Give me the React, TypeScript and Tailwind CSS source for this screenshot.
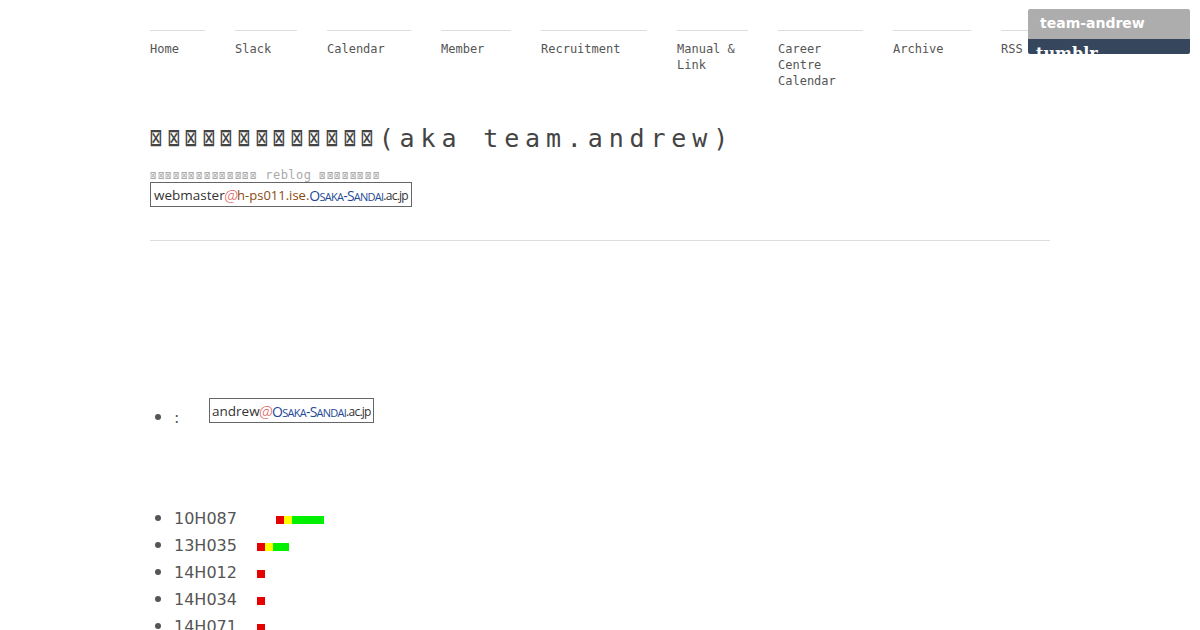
const nav: [string, string][] = [
  ["Home", "w-[55px]"],
  ["Slack", "w-[62px]"],
  ["Calendar", "w-[84px]"],
  ["Member", "w-[70px]"],
  ["Recruitment", "w-[106px]"],
  ["Manual & Link", "w-[71px]"],
  ["Career Centre Calendar", "w-[85px]"],
  ["Archive", "w-[78px]"],
  ["RSS", "w-[49px]"],
];

function Osaka() {
  return (
    <span className="text-[#1f4a96] tracking-[-0.75px] text-[14px]">
      O<span className="text-[11px]">SAKA</span>-S<span className="text-[11px]">ANDAI</span>
    </span>
  );
}

function At() {
  return <span className="text-[#d9534f] italic font-light text-[16px] leading-none mx-[-0.5px]">@</span>;
}

function Bar({ red = 8, yellow = 0, green = 0 }: { red?: number; yellow?: number; green?: number }) {
  return (
    <span className="flex h-2 mt-[3px]">
      <span className="bg-[#e60000]" style={{ width: red }} />
      <span className="bg-[#ffff00]" style={{ width: yellow }} />
      <span className="bg-[#00f000]" style={{ width: green }} />
    </span>
  );
}

function BigTofu({ n }: { n: number }) {
  return (
    <>
      {Array.from({ length: n }, (_, i) => (
        <span key={i} className="inline-block w-[17.6px] origin-[0_60%] scale-x-[0.8] scale-y-[1.25] tracking-normal">{"\u22A0"}</span>
      ))}
    </>
  );
}

function SmallTofu({ n }: { n: number }) {
  return (
    <>
      {Array.from({ length: n }, (_, i) => (
        <span key={i} className="inline-block w-[7.7px] origin-[0_60%] scale-x-[0.85] scale-y-[1.2] tracking-normal">{"\u22A0"}</span>
      ))}
    </>
  );
}

const rows = [
  { id: "10H087", w: "w-[102px]", y: 8, g: 32 },
  { id: "13H035", w: "w-[83px]", y: 8, g: 16 },
  { id: "14H012", w: "w-[83px]", y: 0, g: 0 },
  { id: "14H034", w: "w-[83px]", y: 0, g: 0 },
  { id: "14H071", w: "w-[83px]", y: 0, g: 0 },
];

export default function App() {
  return (
    <div className="relative h-[630px] w-[1200px] overflow-hidden bg-white font-['DejaVu_Sans',sans-serif] text-[#555]">
      <div className="absolute left-[1028px] top-[9px] h-[45px] w-[162px] overflow-hidden rounded-[2px]">
        <div className="h-[30px] bg-[#adadad] pl-3 text-[14px] font-bold leading-[29px] text-white">team-andrew</div>
        <div className="h-[30px] bg-[#36465d] pl-[8px] font-['DejaVu_Serif',serif] text-[16px] font-bold leading-[30px] text-white">tumblr</div>
      </div>

      <div className="mx-auto w-[900px]">
        <nav className="flex gap-[30px] pt-[30px] font-['DejaVu_Sans_Mono',monospace] text-[12px] leading-4 text-[#555]">
          {nav.map(([label, w]) => (
            <div key={label} className={`${w} border-t border-[#ddd] pt-[10px] h-[59px]`}>{label}</div>
          ))}
        </nav>

        <h1 className="mt-[33px] whitespace-nowrap font-['DejaVu_Sans_Mono',monospace] text-[25px] leading-[33px] tracking-[5.85px] text-[#444]">
          <BigTofu n={13} />(aka team.andrew)
        </h1>
        <p className="mt-[13px] whitespace-nowrap font-['DejaVu_Sans_Mono',monospace] text-[12px] leading-[14px] tracking-[0.45px] text-[#aaa]">
          <SmallTofu n={14} /> reblog <SmallTofu n={8} />
        </p>
        <div className="flex h-[25px] w-[262px] items-center whitespace-nowrap border border-[#666] pl-[3px] pt-[2px] font-['Open_Sans',sans-serif] text-[13.5px] text-[#333]">
          webmaster<At /><span className="text-[13px] text-[#8a4a10]">h-ps011.ise.</span><Osaka /><span className="text-[12px] tracking-[-0.75px]">.ac.jp</span>
        </div>
        <hr className="mt-[33px] border-[#ddd]" />

        <ul className="mt-[157px] list-disc pl-6 text-[16px] marker:text-[20px]">
          <li>
            <div className="flex h-[25px] items-start">
              <span className="mt-[10px] w-[35px] leading-5">:</span>
              <span className="flex h-[25px] w-[165px] items-center whitespace-nowrap border border-[#666] pl-[2px] pt-[2px] font-['Open_Sans',sans-serif] text-[13.5px] text-[#333]">
                andrew<At /><Osaka /><span className="text-[12px] tracking-[-0.75px]">.ac.jp</span>
              </span>
            </div>
          </li>
        </ul>

        <ul className="mt-[81px] list-disc pl-6 text-[16px] marker:text-[20px]">
          {rows.map((r) => (
            <li key={r.id} className="h-[27px] leading-[27px]">
              <div className="flex items-center">
                <span className={r.w}>{r.id}</span>
                <Bar yellow={r.y} green={r.g} />
              </div>
            </li>
          ))}
        </ul>
      </div>
    </div>
  );
}
